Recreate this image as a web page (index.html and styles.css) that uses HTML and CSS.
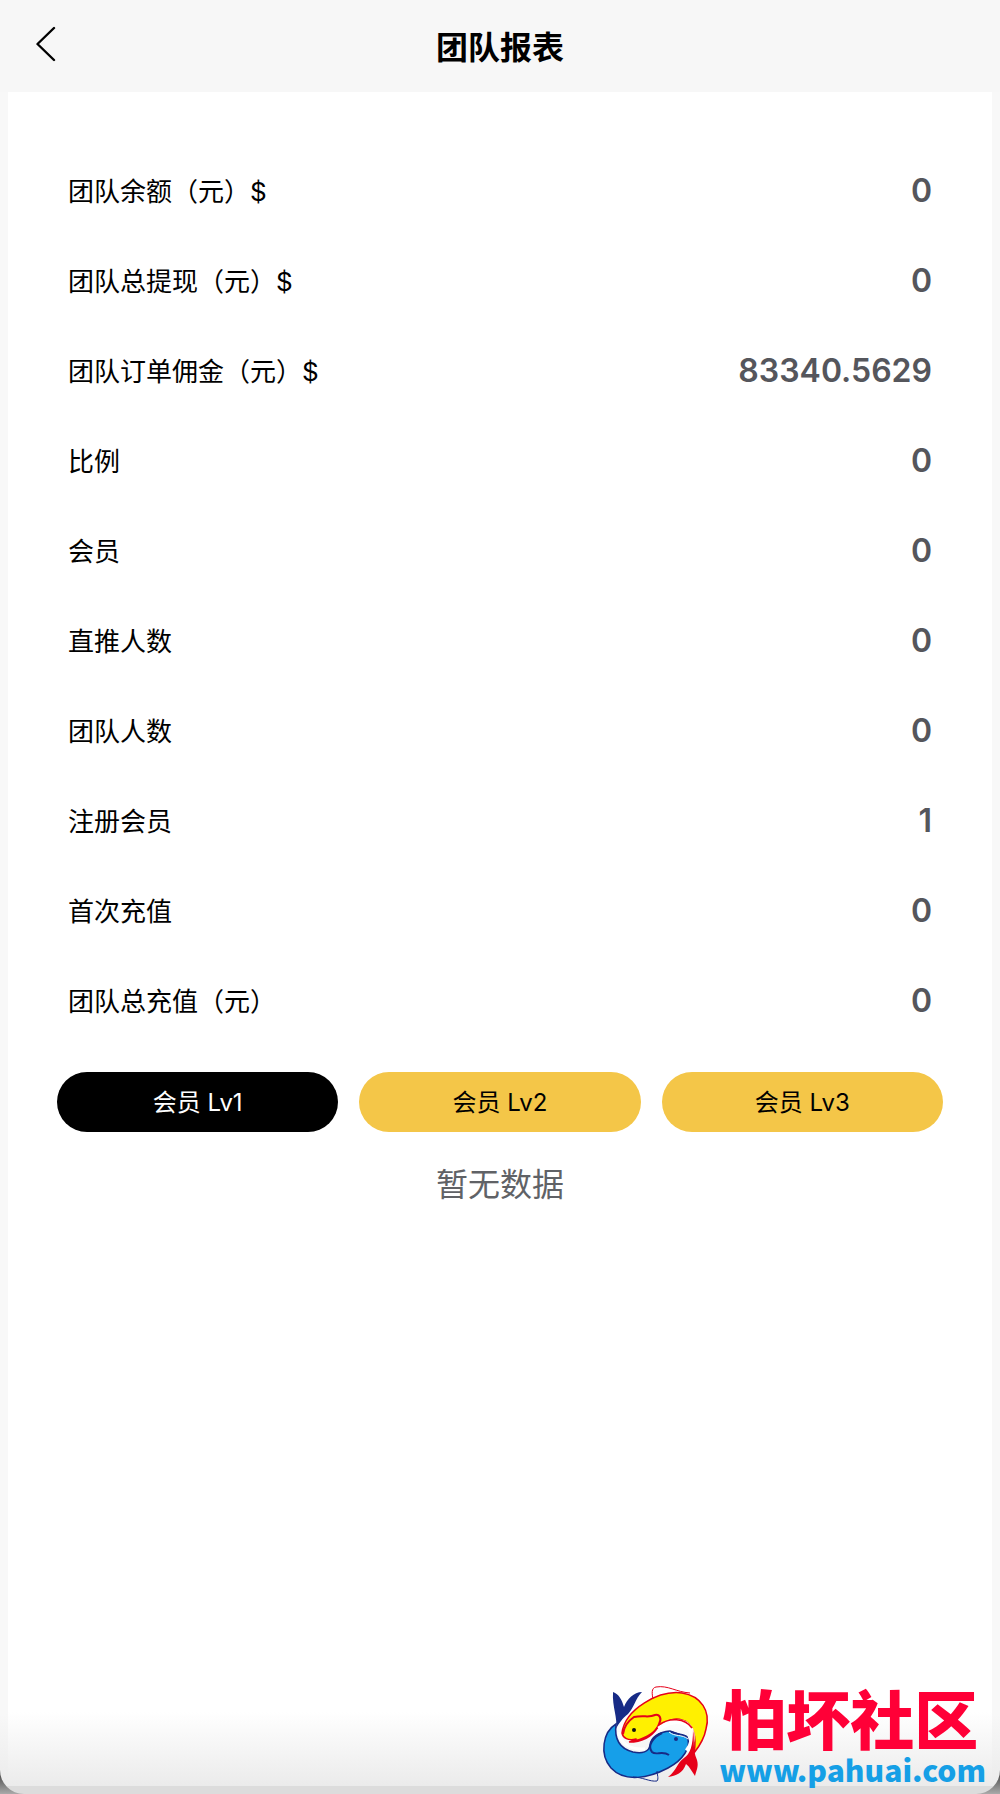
FILE: index.html
```html
<!DOCTYPE html>
<html lang="zh-CN">

<head>
    <meta charset="UTF-8">
    <meta name="viewport" content="width=device-width, initial-scale=1.0">
    <title>团队报表</title>
    <link rel="stylesheet" href="styles.css">
</head>

<body>
    <div class="app">
        <header class="navbar">
            <a class="back" href="#" aria-label="返回">
                <svg width="20" height="36" viewBox="0 0 20 36" fill="none" stroke="#000" stroke-width="2.4" stroke-linecap="round" stroke-linejoin="round">
                    <path d="M18 2 1.5 18 18 34" />
                </svg>
            </a>
            <h1 class="title">团队报表</h1>
        </header>

        <main class="page">
            <dl class="report">
                <div class="row">
                    <dt>团队余额（元）$</dt>
                    <dd>0</dd>
                </div>
                <div class="row">
                    <dt>团队总提现（元）$</dt>
                    <dd>0</dd>
                </div>
                <div class="row">
                    <dt>团队订单佣金（元）$</dt>
                    <dd>83340.5629</dd>
                </div>
                <div class="row">
                    <dt>比例</dt>
                    <dd>0</dd>
                </div>
                <div class="row">
                    <dt>会员</dt>
                    <dd>0</dd>
                </div>
                <div class="row">
                    <dt>直推人数</dt>
                    <dd>0</dd>
                </div>
                <div class="row">
                    <dt>团队人数</dt>
                    <dd>0</dd>
                </div>
                <div class="row">
                    <dt>注册会员</dt>
                    <dd>1</dd>
                </div>
                <div class="row">
                    <dt>首次充值</dt>
                    <dd>0</dd>
                </div>
                <div class="row">
                    <dt>团队总充值（元）</dt>
                    <dd>0</dd>
                </div>
            </dl>

            <div class="levels">
                <button class="level active" type="button">会员 Lv1</button>
                <button class="level" type="button">会员 Lv2</button>
                <button class="level" type="button">会员 Lv3</button>
            </div>

            <p class="empty">暂无数据</p>

            <footer class="brand">
                <svg class="logo" viewBox="0 0 120 110" aria-hidden="true">
                    <!-- синяя рыба -->
                    <path d="M21 44C8 52 4 74 16 88C30 103 54 98 73 88C88 80 97 67 92 57L75 51C64 52 56 57 55 65C54 72 47 74 38 72C26 69 19 60 21 44Z" fill="#169fe9" stroke="#172b86" stroke-width="1.5" />
                    <path d="M92 57C89 54 82 55 76 52M67 53C58 57 52 66 57 72C61 76 67 70 74 75" fill="none" stroke="#172b86" stroke-width="2" />
                    <path d="M74 52C80 57 87 54 93 59" fill="none" stroke="#fff" stroke-width="1" />
                    <path d="M38 97C47 97 55 102 62 101C64 99 62 94 62 91" fill="none" stroke="#172b86" stroke-width="1" />
                    <path d="M21 49C23 38 17 27 18 12C24 14 27 20 29 27C32 19 39 12 47 12C40 19 39 28 33 34C27 39 24 43 21 49Z" fill="#172b86" />
                    <!-- жёлтая рыба -->
                    <path d="M27 53C30 29 64 10 87 13C106 16 116 31 111 49C109 60 103 68 99 73C102 56 98 43 87 40C77 36 70 44 62 48C57 56 48 62 34 62C39 61 42 59 41 59C33 61 28 58 27 53Z" fill="#fff000" stroke="#e60019" stroke-width="1.5" />
                    <path d="M58 19C57 14 56 8 61 7C73 5 81 12 95 13" fill="none" stroke="#e60019" stroke-width="1" />
                    <path d="M28 54C29 47 33 41 39 37C49 35 54 38 60 35C65 34 67 39 64 44C61 53 51 58 40 61" fill="none" stroke="#e60019" stroke-width="2" />
                    <path d="M64 49C76 39 91 39 96 50C99 58 96 66 92 71" fill="none" stroke="#fff" stroke-width="5" />
                    <path d="M64 45C74 37 90 38 97 48" fill="none" stroke="#e60019" stroke-width="1.5" />
                    <path d="M24 52C25 63 35 70 50 69" fill="none" stroke="#fff" stroke-width="3" />
                    <path d="M98 50C100 60 97 68 102 80C104 87 101 91 100 96C97 92 95 87 91 84C88 93 81 96 73 97C82 90 82 83 89 78C95 74 98 66 98 50Z" fill="#e60019" />
                    <circle cx="39" cy="50" r="2" fill="#111" />
                    <circle cx="81" cy="59" r="2" fill="#172b86" />
                </svg>
                <div class="brand-text">
                    <strong class="brand-name">怕坏社区</strong>
                    <a class="brand-link" href="#">www.pahuai.com</a>
                </div>
            </footer>
        </main>
    </div>
</body>

</html>
```
FILE: styles.css
```css
* {
    box-sizing: border-box;
}

body {
    margin: 0;
    background: linear-gradient(#555 0 99%, #aaa 100%);
    color: #000;
    font-family: "Inter", "Noto Sans CJK SC", sans-serif;
}

.app {
    display: flex;
    flex-direction: column;
    min-height: 100vh;
    padding: 0 8px 8px;
    background: linear-gradient(to top, #dcdcdc 0 8px, #ebebeb 8px, #f8f8f8 80px);
    border-radius: 0 0 24px 24px;
}

.navbar {
    display: grid;
    grid-template-columns: 60px 1fr 60px;
    align-items: center;
    height: 92px;
    margin: 0 -8px;
    padding: 0 8px;
    background: #f7f7f7;
}

.back {
    display: flex;
    padding: 0 0 4px 28px;
}

.title {
    margin: 0;
    padding-top: 4px;
    text-align: center;
    font-size: 32px;
    line-height: 48px;
    font-weight: 700;
}

.page {
    display: flex;
    flex: 1;
    flex-direction: column;
    padding-top: 52px;
    background: #fff;
}

.report {
    margin: 0;
    padding: 0 60px;
}

.row {
    display: flex;
    align-items: center;
    justify-content: space-between;
    height: 90px;
}

dt {
    font-size: 26px;
}

dd {
    margin: 0;
    padding-top: 2px;
    color: #55565c;
    font-size: 32px;
    font-weight: 600;
}

.levels {
    display: flex;
    gap: 21px;
    margin: 28px 49px 0;
}

.level {
    flex: 1;
    height: 60px;
    padding: 0 0 4px;
    border: 0;
    border-radius: 30px;
    background: #f4c648;
    color: #000;
    font: 24px "Inter", "Noto Sans CJK SC", sans-serif;
}

.level.active {
    background: #000;
    color: #fff;
}

.empty {
    margin: 29px 0 0;
    text-align: center;
    color: #606266;
    font-size: 32px;
    line-height: 48px;
}

.brand {
    display: flex;
    justify-content: flex-end;
    gap: 4px;
    height: 106px;
    margin-top: auto;
    padding-right: 6px;
    background: linear-gradient(#fff 30%, #ebebeb);
}

.logo {
    width: 120px;
    height: 110px;
}

.brand-text {
    display: flex;
    flex-direction: column;
}

.brand-name {
    padding-left: 3px;
    color: #ff0037;
    font-family: "Noto Sans CJK SC", sans-serif;
    font-size: 64px;
    font-weight: 900;
    line-height: 72px;
}

.brand-link {
    color: #159fe6;
    font-family: "Noto Sans CJK SC", sans-serif;
    font-size: 30px;
    font-weight: 900;
    line-height: 34px;
    text-decoration: none;
}
```
